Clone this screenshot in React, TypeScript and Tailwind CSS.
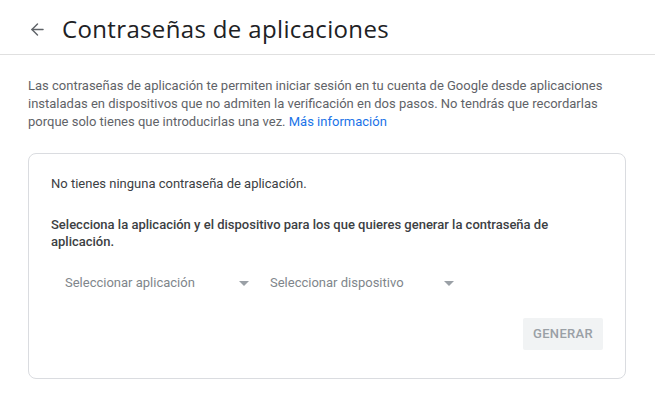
import { ArrowLeft } from "lucide-react"

const Select = ({ label }: { label: string }) => (
  <div className="flex items-center justify-between w-[202px] h-[32px] pl-[14px] pr-[4px]">
    <span className="text-[13px] text-[#80868b]">{label}</span>
    <svg width="10" height="5" viewBox="0 0 10 5" className="mt-[1px]">
      <path d="M0 0 L10 0 L5 5 Z" fill="#9aa0a6" />
    </svg>
  </div>
)

export default function App() {
  return (
    <div className="w-[655px] h-[402px] bg-white font-['Roboto',sans-serif] overflow-hidden">
      <header className="flex items-center h-[55px] pl-[28px] pt-[4px] border-b border-[#e0e0e0]">
        <ArrowLeft size={19} strokeWidth={1.8} className="text-[#5f6368]" />
        <h1 className="ml-[15px] text-[24px] text-[#202124] tracking-[0.35px] font-['Open_Sans',sans-serif]">
          Contraseñas de aplicaciones
        </h1>
      </header>
      <div className="px-[28px] pt-[22px]">
        <p className="text-[13px] leading-[18px] text-[#5f6368]">
          Las contraseñas de aplicación te permiten iniciar sesión en tu cuenta de Google desde aplicaciones
          instaladas en dispositivos que no admiten la verificación en dos pasos. No tendrás que recordarlas
          porque solo tienes que introducirlas una vez.{" "}
          <a className="text-[#1a73e8]">Más información</a>
        </p>
        <div className="mt-[22px] w-[598px] h-[226px] border border-[#dadce0] rounded-[8px] px-[22px] pt-[21px]">
          <p className="text-[13px] leading-[18px] text-[#3c4043]">No tienes ninguna contraseña de aplicación.</p>
          <p className="mt-[23px] text-[13px] leading-[17px] font-medium text-[#3c4043]">
            Selecciona la aplicación y el dispositivo para los que quieres generar la contraseña de aplicación.
          </p>
          <div className="mt-[17px] flex gap-[3px]">
            <Select label="Seleccionar aplicación" />
            <Select label="Seleccionar dispositivo" />
          </div>
          <div className="mt-[19px] flex justify-end">
            <button className="w-[80px] h-[32px] bg-[#f1f3f4] rounded-[2px] text-[13px] font-medium tracking-[0.3px] text-[#9aa0a6]">
              GENERAR
            </button>
          </div>
        </div>
      </div>
    </div>
  )
}
